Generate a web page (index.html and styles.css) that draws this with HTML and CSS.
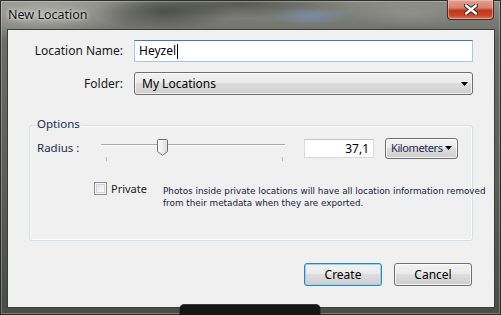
FILE: index.html
```html
<!DOCTYPE html>
<html>
<head>
<meta charset="utf-8">
<link rel="stylesheet" href="styles.css">
</head>
<body>
<div class="window">
  <div class="titlebar">
    <span class="title">New Location</span>
    <div class="close">
      <svg width="14" height="11" viewBox="0 0 14 11">
        <path d="M2 1.5 L12 9.5 M12 1.5 L2 9.5" stroke="#3a2520" stroke-width="4.2" stroke-linecap="round"/>
        <path d="M2 1.5 L12 9.5 M12 1.5 L2 9.5" stroke="#ffffff" stroke-width="2.4" stroke-linecap="round"/>
      </svg>
    </div>
  </div>
  <div class="client">
    <div class="form">
      <label class="lbl">Location Name:</label>
      <div class="textbox"><span>Heyzel</span><span class="caret"></span></div>
      <label class="lbl">Folder:</label>
      <div class="combo">
        <span>My Locations</span>
        <svg class="arrow" width="7" height="4" viewBox="0 0 7 4"><path d="M0 0 H7 L3.5 4 Z" fill="#000"/></svg>
      </div>
    </div>
    <div class="group">
      <span class="group-title">Options</span>
      <div class="radius-row">
        <span class="rlabel">Radius :</span>
        <div class="slider">
          <div class="track"></div>
          <span class="tick tick-l"></span>
          <span class="tick tick-r"></span>
          <svg class="thumb" width="11" height="17" viewBox="0 0 11 17">
            <defs>
              <linearGradient id="tg" x1="0" y1="0" x2="1" y2="0">
                <stop offset="0" stop-color="#ffffff"/>
                <stop offset="1" stop-color="#dcdcdc"/>
              </linearGradient>
            </defs>
            <path d="M1.5 0.5 H9.5 Q10.5 0.5 10.5 1.5 V12.5 L5.5 16.3 L0.5 12.5 V1.5 Q0.5 0.5 1.5 0.5 Z" fill="url(#tg)" stroke="#707070"/>
          </svg>
        </div>
        <div class="valuebox">37,1</div>
        <div class="btn unit">
          <span>Kilometers</span>
          <svg class="arrow" width="7" height="4" viewBox="0 0 7 4"><path d="M0 0 H7 L3.5 4 Z" fill="#000"/></svg>
        </div>
      </div>
      <div class="private-row">
        <div class="private">
          <span class="check"></span>
          <span class="private-lbl">Private</span>
        </div>
        <p class="desc">Photos inside private locations will have all location information removed<br>from their metadata when they are exported.</p>
      </div>
    </div>
    <div class="actions">
      <div class="btn push default">Create</div>
      <div class="btn push">Cancel</div>
    </div>
  </div>
  <div class="tooltip">Denote Zone</div>
</div>
</body>
</html>
```
FILE: styles.css
```css
html, body {
  margin: 0;
  padding: 0;
  background: #5e605a;
}

.window {
  position: relative;
  width: 501px;
  height: 315px;
  overflow: hidden;
  display: flex;
  flex-direction: column;
  font-family: "Noto Sans", "Open Sans", sans-serif;
  font-size: 12px;
  color: #1e1e1e;
  background:
    radial-gradient(ellipse 40px 10px at 310px 16px, rgba(120,150,200,0.55), rgba(120,150,200,0) 100%),
    radial-gradient(ellipse 70px 18px at 165px 12px, rgba(40,42,36,0.55), rgba(40,42,36,0) 100%),
    radial-gradient(ellipse 120px 14px at 240px 4px, rgba(30,32,26,0.45), rgba(30,32,26,0) 100%),
    radial-gradient(ellipse 90px 30px at 40px 14px, rgba(200,202,195,0.55), rgba(200,202,195,0) 100%),
    radial-gradient(ellipse 60px 14px at 410px 14px, rgba(170,172,165,0.35), rgba(170,172,165,0) 100%),
    linear-gradient(180deg, #8a8c85 0%, #6a6c65 12%, #5a5c55 60%, #4a4c46 100%);
  box-shadow: inset 0 0 0 1px #2e302b, inset 0 0 0 2px rgba(255,255,255,0.25);
}

.titlebar {
  height: 29px;
  display: flex;
  justify-content: space-between;
  align-items: flex-start;
  flex: none;
}

.title {
  margin: 7px 0 0 8px;
  line-height: 16px;
  font-size: 12.5px;
  color: #141414;
  text-shadow: 0 0 6px rgba(255,255,255,0.9), 0 0 3px rgba(255,255,255,0.8);
}

.close {
  width: 45px;
  height: 19px;
  margin-right: 7px;
  border: 1px solid #4a2a24;
  border-top: none;
  border-radius: 0 0 4px 4px;
  background: linear-gradient(180deg, #e2a193 0%, #d58270 40%, #c0391f 55%, #c84328 80%, #de7a5c 100%);
  box-shadow: inset 0 0 0 1px rgba(255,220,210,0.45);
  display: flex;
  align-items: center;
  justify-content: center;
}

.client {
  margin-left: 7px;
  width: 488px;
  height: 279px;
  box-sizing: border-box;
  border: 1px solid #3b3d38;
  background: #f0f0f0;
  display: flex;
  flex-direction: column;
  flex: none;
}

.form {
  display: grid;
  grid-template-columns: 115px 339px;
  column-gap: 11px;
  row-gap: 10px;
  padding-top: 10px;
  align-items: center;
}

.lbl {
  text-align: right;
  line-height: 16px;
  color: #1a1a1a;
}

.textbox {
  height: 22px;
  box-sizing: border-box;
  border: 1px solid #abc6e2;
  border-top-color: #3d7bad;
  background: #fff;
  display: flex;
  align-items: center;
  padding-left: 4px;
  line-height: 16px;
  color: #000;
}

.caret {
  width: 1px;
  height: 15px;
  background: #000;
  margin-left: 1px;
}

.combo {
  height: 23px;
  box-sizing: border-box;
  border: 1px solid #707070;
  border-radius: 3px;
  background: linear-gradient(180deg, #f2f2f2 0%, #ebebeb 45%, #dddddd 50%, #cfcfcf 100%);
  box-shadow: inset 0 0 0 1px rgba(255,255,255,0.7);
  display: flex;
  align-items: center;
  justify-content: space-between;
  padding: 0 4px 0 7px;
  line-height: 16px;
  color: #000;
}

.arrow {
  display: block;
  flex: none;
}

.group {
  margin: 30px 21px 0 21px;
  height: 116px;
  box-sizing: border-box;
  border: 1px solid #d5dfe5;
  border-radius: 3px;
  box-shadow: inset 0 0 0 1px #fbfbfb;
  display: flex;
  flex-direction: column;
  align-items: flex-start;
}

.group-title {
  margin: -9px 0 0 6px;
  padding: 0 1px;
  line-height: 14px;
  font-size: 11.5px;
  background: #f0f0f0;
  color: #1b2a50;
}

.radius-row {
  margin-top: 7px;
  height: 20px;
  display: flex;
  align-items: center;
  padding-left: 7px;
}

.rlabel {
  width: 61px;
  line-height: 16px;
  font-size: 11.5px;
  color: #1b2a50;
}

.slider {
  position: relative;
  width: 192px;
  height: 20px;
}

.track {
  margin: 6px 0 0 3px;
  width: 184px;
  height: 1px;
  background: #a8a8a8;
  border-bottom: 1px solid #ffffff;
}

.tick {
  position: absolute;
  top: 19px;
  width: 1px;
  height: 4px;
  background: #b4b4b4;
}

.tick-l { left: 8px; }
.tick-r { left: 184px; }

.thumb {
  position: absolute;
  left: 59px;
  top: 1px;
}

.valuebox {
  margin-left: 14px;
  width: 70px;
  height: 19px;
  box-sizing: border-box;
  border: 1px solid #dadada;
  border-top-color: #c4c4c4;
  background: #fff;
  text-align: right;
  padding-right: 4px;
  line-height: 17px;
  color: #000;
}

.btn {
  box-sizing: border-box;
  border: 1px solid #707070;
  border-radius: 3px;
  background: linear-gradient(180deg, #f2f2f2 0%, #ebebeb 45%, #dddddd 50%, #cfcfcf 100%);
  box-shadow: inset 0 0 0 1px rgba(255,255,255,0.75);
  color: #000;
  line-height: 16px;
}

.unit {
  margin-left: 11px;
  width: 73px;
  height: 21px;
  display: flex;
  align-items: center;
  justify-content: space-between;
  padding: 0 5px 0 5px;
  font-size: 11px;
  letter-spacing: -0.4px;
  color: #1b2a50;
}

.private-row {
  margin-top: 24px;
  padding-left: 64px;
  display: flex;
  align-items: flex-start;
}

.private {
  width: 69px;
  display: flex;
  align-items: flex-start;
}

.check {
  width: 13px;
  height: 13px;
  box-sizing: border-box;
  border: 1px solid #8e8f8f;
  background: linear-gradient(135deg, #dcdcdc 0%, #f4f4f4 60%, #ffffff 100%);
  box-shadow: inset 0 0 0 1px #f4f4f4, inset 0 0 0 2px #d4d4d4;
}

.private-lbl {
  margin-left: 4px;
  line-height: 13px;
  font-size: 11px;
  color: #222;
}

.desc {
  margin: 3px 0 0 0;
  white-space: nowrap;
  font-family: "DejaVu Sans", sans-serif;
  font-size: 8.8px;
  line-height: 12px;
  color: #1a1a3a;
}

.actions {
  margin-top: 22px;
  padding-right: 22px;
  display: flex;
  justify-content: flex-end;
  gap: 12px;
}

.push {
  width: 78px;
  height: 23px;
  display: flex;
  align-items: center;
  justify-content: center;
}

.push.default {
  border-color: #3c7fb1;
  box-shadow: inset 0 0 0 1px #93d5f3;
}

.tooltip {
  position: absolute;
  left: 179px;
  top: 304px;
  width: 142px;
  height: 20px;
  box-sizing: border-box;
  background: #151515;
  border: 1px solid #3a3a3a;
  border-radius: 5px 5px 0 0;
  color: #fff;
  font-size: 13px;
  line-height: 16px;
  padding: 7px 0 0 21px;
}
```
